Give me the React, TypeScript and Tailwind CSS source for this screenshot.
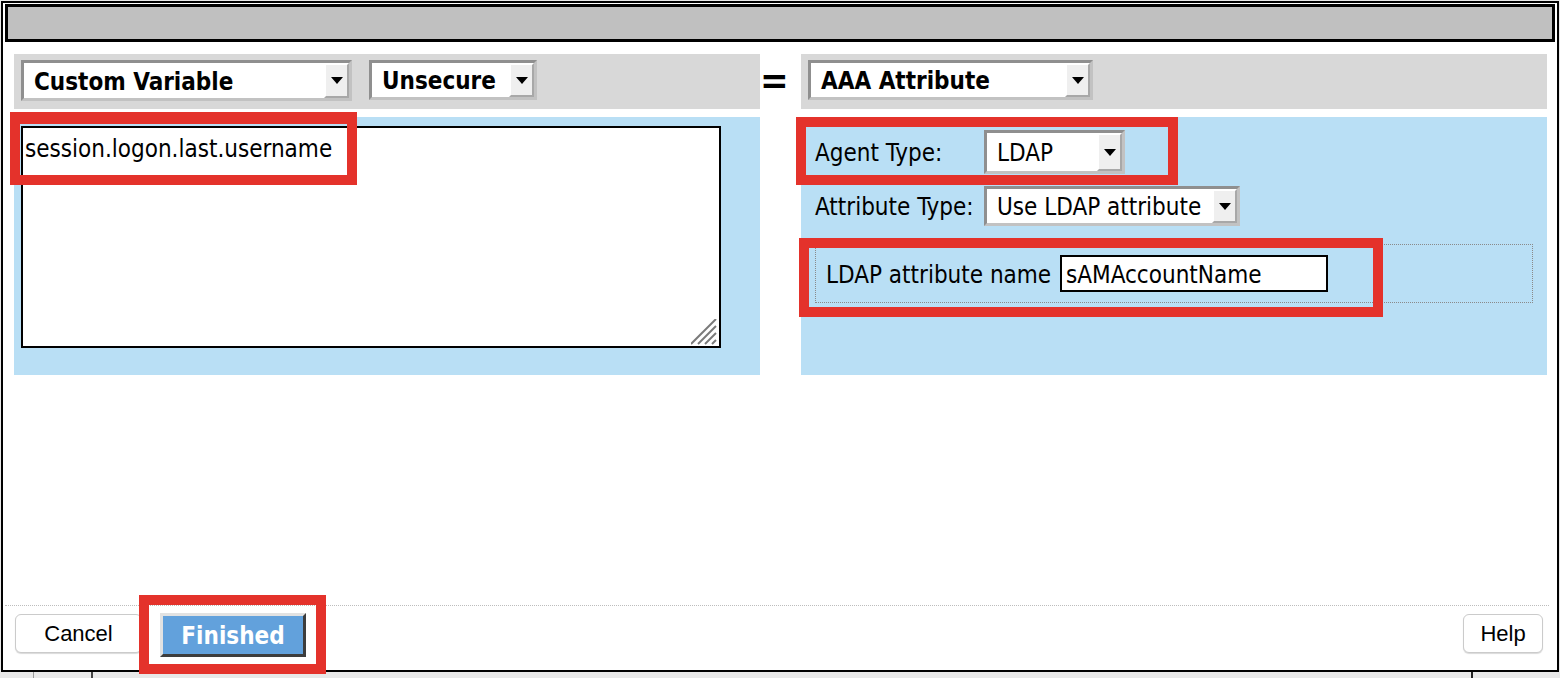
const tahoma = "font-['DejaVu_Sans_Condensed','DejaVu_Sans',sans-serif]";

function Arrow() {
  return (
    <div className="flex h-full w-[25px] shrink-0 items-center justify-center border-2 border-t-white border-l-white border-b-[#a8a8a8] border-r-[#a8a8a8] bg-[#efefef]">
      <div className="h-0 w-0 border-x-[6px] border-t-[7px] border-x-transparent border-t-black" />
    </div>
  );
}

function Select({
  className,
  children,
}: {
  className: string;
  children: React.ReactNode;
}) {
  return (
    <div
      className={`flex shrink-0 border-[3px] border-t-[#8f8f8f] border-l-[#8f8f8f] border-b-[#c2c2c2] border-r-[#c2c2c2] bg-white ${className}`}
    >
      <div className={`flex flex-1 items-center overflow-hidden whitespace-nowrap pl-[10px] pt-[2px] text-[24px] text-black ${tahoma}`}>
        {children}
      </div>
      <Arrow />
    </div>
  );
}

export default function App() {
  return (
    <div className="relative h-[678px] w-[1560px] overflow-hidden bg-[#e8e8e8]">
      <div className="ml-[1px] mt-[1px] flex h-[671px] w-[1558px] flex-col border-2 border-black bg-white">
        <div className="mx-[2px] mt-[1px] h-[38px] border-[3px] border-black bg-[#c0c0c0]" />

        <div className="ml-[11px] mt-[12px] grid grid-cols-[746px_41px_746px] grid-rows-[55px_258px] gap-y-[8px]">
          <div className="flex items-start gap-[17px] bg-[#d8d8d8] pl-[7px] pt-[6px]">
            <Select className="h-[41px] w-[331px]">
              <span className="font-bold">Custom Variable</span>
            </Select>
            <Select className="h-[40px] w-[168px]">
              <span className="font-bold">Unsecure</span>
            </Select>
          </div>
          <div className={`flex items-center pb-[4px] text-[38px] font-bold leading-none ${tahoma}`}>=</div>
          <div className="flex items-start bg-[#d8d8d8] pl-[7px] pt-[6px]">
            <Select className="h-[40px] w-[285px]">
              <span className="font-bold">AAA Attribute</span>
            </Select>
          </div>

          <div className="bg-[#b9dff5] pl-[7px] pt-[9px]">
            <div className={`relative h-[222px] w-[700px] border-2 border-black bg-white px-[2px] pt-[7px] text-[24px] leading-[28px] ${tahoma}`}>
              session.logon.last.username
              <svg className="absolute bottom-[1px] right-[1px]" width="27" height="26" viewBox="0 0 27 26">
                <g stroke="#7a7a7a" strokeWidth="2">
                  <line x1="0" y1="25" x2="25" y2="0" />
                  <line x1="7" y1="25" x2="25" y2="7" />
                  <line x1="14" y1="25" x2="25" y2="14" />
                  <line x1="21" y1="25" x2="25" y2="21" />
                </g>
              </svg>
            </div>
          </div>
          <div />
          <div className={`flex flex-col bg-[#b9dff5] pl-[14px] pt-[13px] text-[24px] ${tahoma}`}>
            <div className="flex h-[44px] items-center">
              <span className="w-[169px] pt-[2px]">Agent Type:</span>
              <Select className="h-[44px] w-[141px]">LDAP</Select>
            </div>
            <div className="mt-[12px] flex h-[40px] items-center">
              <span className="w-[169px] pt-[2px]">Attribute Type:</span>
              <Select className="h-[40px] w-[256px]">Use LDAP attribute</Select>
            </div>
            <div className="mt-[18px] flex h-[59px] w-[718px] items-center border border-dotted border-[#8a8a8a] pl-[10px]">
              <span className="w-[234px] pt-[2px]">LDAP attribute name</span>
              <div className="flex h-[37px] w-[268px] items-center border-2 border-black bg-white pl-[4px] pt-[2px]">
                sAMAccountName
              </div>
            </div>
          </div>
        </div>

        <div className="ml-[2px] mr-[8px] mt-auto flex h-[65px] items-start border-t border-dotted border-[#bdbdbd] pl-[10px] pr-[6px] pt-[8px] font-['Liberation_Sans',sans-serif] text-[22px]">
          <button className="flex h-[39px] w-[127px] items-center justify-center rounded-[6px] border border-[#cbcbcb] bg-white shadow-[0_1px_1px_rgba(0,0,0,0.15)]">
            Cancel
          </button>
          <button
            className={`ml-[18px] mt-[-1px] flex h-[44px] w-[146px] items-center justify-center border-[3px] border-t-[#e2e2e2] border-l-[#e2e2e2] border-b-[#3d3d3d] border-r-[#3d3d3d] bg-[#62a1dc] pt-[2px] text-[24px] font-bold text-white ${tahoma}`}
          >
            Finished
          </button>
          <button className="ml-auto flex h-[39px] w-[80px] items-center justify-center rounded-[6px] border border-[#cbcbcb] bg-white shadow-[0_1px_1px_rgba(0,0,0,0.15)]">
            Help
          </button>
        </div>
      </div>

      <div className="flex h-[6px]">
        <div className="w-[33px]" />
        <div className="w-[58px] border-l border-[#9a9a9a]" />
        <div className="w-[1380px] border-l-2 border-[#444]" />
        <div className="flex-1 border-l-2 border-[#222]" />
      </div>

      <div className="absolute left-[10px] top-[112px] h-[73px] w-[347px] border-[10px] border-t-[12px] border-[#e4322b]" />
      <div className="absolute left-[796px] top-[117px] h-[68px] w-[382px] border-[10px] border-[#e4322b]" />
      <div className="absolute left-[799px] top-[238px] h-[79px] w-[584px] border-[10px] border-[#e4322b]" />
      <div className="absolute left-[139px] top-[595px] h-[79px] w-[187px] border-[10px] border-[#e4322b]" />
    </div>
  );
}
